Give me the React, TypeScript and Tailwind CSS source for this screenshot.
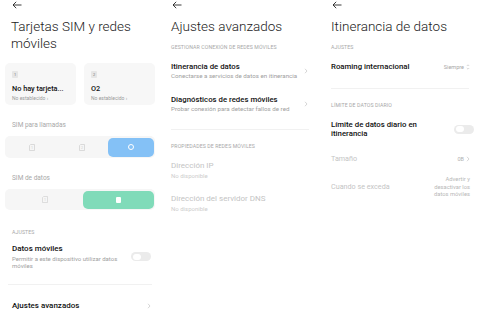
import React from 'react'

const font = { fontFamily: 'Roboto, "Noto Sans", sans-serif' }

function BackArrow() {
  return (
    <svg width="10" height="8" viewBox="0 0 10 8" className="text-neutral-800">
      <path d="M9.5 4H1M4.2 0.8L1 4l3.2 3.2" fill="none" stroke="currentColor" strokeWidth="0.9" />
    </svg>
  )
}

function Chevron({ className = '' }: { className?: string }) {
  return (
    <svg width="4" height="6" viewBox="0 0 4 6" className={className}>
      <path d="M1 0.8L3 3 1 5.2" fill="none" stroke="#c4c4c4" strokeWidth="0.7" />
    </svg>
  )
}

function Toggle() {
  return (
    <div className="w-[20px] h-[9px] rounded-full bg-[#ebebeb] flex items-center px-[1.5px]">
      <div className="w-[8px] h-[6px] rounded-full bg-white" />
    </div>
  )
}

function SimGlyph({ color, n }: { color: string; n?: string }) {
  return (
    <svg width="6" height="7" viewBox="0 0 6 7">
      <path d="M1.6 0.5H5.5V6.5H0.5V1.6Z" fill="none" stroke={color} strokeWidth="0.7" />
      {n && (
        <text x="3" y="5" fontSize="3.6" textAnchor="middle" fill={color} fontFamily="Roboto, sans-serif">
          {n}
        </text>
      )}
    </svg>
  )
}

function SimCard({ n, name, status }: { n: string; name: string; status: string }) {
  return (
    <div className="flex-1 min-w-0 h-[42px] rounded-[5px] bg-[#f7f7f7] px-[7px] pt-[8px] flex flex-col">
      <div className="w-[6px] h-[7px] rounded-[1px] bg-[#e6e6e6] text-[4px] text-[#777] flex items-center justify-center leading-none">
        {n}
      </div>
      <div className="mt-[6px] text-[7.3px] leading-[10px] text-[#111] font-medium whitespace-nowrap">{name}</div>
      <div className="mt-[0.5px] text-[5px] leading-[6px] text-[#9a9a9a] whitespace-nowrap">{status}</div>
    </div>
  )
}

function SectionHeader({ children, className = '' }: { children: React.ReactNode; className?: string }) {
  return <div className={`text-[5.2px] leading-[6px] tracking-[0.1px] text-[#a8a8a8] uppercase ${className}`}>{children}</div>
}

function PanelSims() {
  return (
    <div className="w-[160px] flex flex-col px-[5px]">
      <div className="pl-[7px] pt-[1px] h-[9px] flex items-center">
        <BackArrow />
      </div>
      <div className="pl-[6px] mt-[9px] text-[13.5px] leading-[17px] font-light text-[#222]">
        Tarjetas SIM y redes
        <br />
        móviles
      </div>
      <div className="mt-[11px] flex gap-[8px]">
        <SimCard n="1" name="No hay tarjeta..." status="No establecido ›" />
        <SimCard n="2" name="O2" status="No establecido ›" />
      </div>
      <div className="pl-[7px] mt-[16px] text-[6.5px] leading-[8px] text-[#a8a8a8]">SIM para llamadas</div>
      <div className="mt-[7px] h-[22px] rounded-[5px] bg-[#f6f6f6] flex items-center p-[1.5px]">
        <div className="flex-1 h-full flex items-center justify-center">
          <SimGlyph color="#cfcfcf" n="1" />
        </div>
        <div className="flex-1 h-full flex items-center justify-center">
          <SimGlyph color="#cfcfcf" n="2" />
        </div>
        <div className="w-[46px] h-full rounded-[5px] bg-[#84c1f6] flex items-center justify-center">
          <div className="w-[6px] h-[6px] rounded-full border-[1.5px] border-white" />
        </div>
      </div>
      <div className="pl-[7px] mt-[16px] text-[6.5px] leading-[8px] text-[#a8a8a8]">SIM de datos</div>
      <div className="mt-[7px] h-[21px] rounded-[5px] bg-[#f6f6f6] flex items-center p-[1.5px]">
        <div className="flex-1 h-full flex items-center justify-center">
          <SimGlyph color="#d2d2d2" n="1" />
        </div>
        <div className="w-[71px] h-full rounded-[5px] bg-[#80dbb9] flex items-center justify-center">
          <div className="w-[5px] h-[6px] rounded-[1px] bg-white" />
        </div>
      </div>
      <SectionHeader className="pl-[7px] mt-[19px]">Ajustes</SectionHeader>
      <div className="pl-[7px] pr-[4px] mt-[9px] flex items-center">
        <div className="flex-1">
          <div className="text-[8px] leading-[10px] font-medium text-[#111]">Datos móviles</div>
          <div className="mt-[0.5px] text-[6px] leading-[7.5px] text-[#a0a0a0] pr-[8px]">
            Permitir a este dispositivo utilizar datos móviles
          </div>
        </div>
        <Toggle />
      </div>
      <div className="mx-[3px] mt-[14px] h-px bg-[#f1f1f1]" />
      <div className="pl-[7px] pr-[4px] mt-[16px] flex items-center justify-between">
        <div className="text-[8px] leading-[10px] font-medium text-[#111]">Ajustes avanzados</div>
        <Chevron />
      </div>
    </div>
  )
}

function NavItem({ title, sub }: { title: string; sub: string }) {
  return (
    <div className="flex items-center">
      <div className="flex-1">
        <div className="text-[7.8px] leading-[10px] font-medium text-[#111]">{title}</div>
        <div className="mt-[0.5px] text-[6.2px] leading-[7px] text-[#a0a0a0]">{sub}</div>
      </div>
      <Chevron />
    </div>
  )
}

function InfoItem({ title, sub }: { title: string; sub: string }) {
  return (
    <div>
      <div className="text-[8px] leading-[10px] text-[#c4c4c4]">{title}</div>
      <div className="mt-[0.5px] text-[6px] leading-[7px] text-[#cdcdcd]">{sub}</div>
    </div>
  )
}

function PanelAdvanced() {
  return (
    <div className="w-[160px] flex flex-col px-[11px]">
      <div className="pl-[1px] pt-[1px] h-[9px] flex items-center">
        <BackArrow />
      </div>
      <div className="mt-[9px] text-[13.5px] leading-[17px] font-light text-[#222]">Ajustes avanzados</div>
      <SectionHeader className="mt-[9px]">Gestionar conexión de redes móviles</SectionHeader>
      <div className="mt-[12px] pr-[1px]">
        <NavItem title="Itinerancia de datos" sub="Conectarse a servicios de datos en itinerancia" />
      </div>
      <div className="mt-[15.5px] pr-[1px]">
        <NavItem title="Diagnósticos de redes móviles" sub="Probar conexión para detectar fallos de red" />
      </div>
      <div className="mt-[16.5px] h-px bg-[#f1f1f1]" />
      <SectionHeader className="mt-[13px]">Propiedades de redes móviles</SectionHeader>
      <div className="mt-[12px]">
        <InfoItem title="Dirección IP" sub="No disponible" />
      </div>
      <div className="mt-[15.5px]">
        <InfoItem title="Dirección del servidor DNS" sub="No disponible" />
      </div>
    </div>
  )
}

function PanelRoaming() {
  return (
    <div className="w-[160px] flex flex-col pl-[11px] pr-[6px]">
      <div className="pl-[1px] pt-[1px] h-[9px] flex items-center">
        <BackArrow />
      </div>
      <div className="mt-[9px] text-[13.5px] leading-[17px] font-light text-[#222]">Itinerancia de datos</div>
      <SectionHeader className="mt-[9px]">Ajustes</SectionHeader>
      <div className="mt-[12px] flex items-center justify-between pr-[4px]">
        <div className="text-[7.8px] leading-[10px] font-medium text-[#111]">Roaming internacional</div>
        <div className="flex items-center gap-[2px] text-[5.5px] text-[#a8a8a8]">
          Siempre
          <svg width="4" height="6" viewBox="0 0 4 6">
            <path d="M0.8 2L2 0.8 3.2 2M0.8 4L2 5.2 3.2 4" fill="none" stroke="#bdbdbd" strokeWidth="0.6" />
          </svg>
        </div>
      </div>
      <div className="mt-[16px] mr-[5px] h-px bg-[#f1f1f1]" />
      <SectionHeader className="mt-[13px]">Límite de datos diario</SectionHeader>
      <div className="mt-[11.5px] flex items-center">
        <div className="flex-1 text-[7.8px] leading-[9.5px] font-medium text-[#111] pr-[30px]">
          Límite de datos diario en itinerancia
        </div>
        <Toggle />
      </div>
      <div className="mt-[15.5px] flex items-center justify-between pr-[4px]">
        <div className="text-[7.2px] leading-[10px] text-[#c4c4c4]">Tamaño</div>
        <div className="flex items-center gap-[2px] text-[5.5px] text-[#b0b0b0]">
          0B
          <Chevron />
        </div>
      </div>
      <div className="mt-[12px] flex items-center justify-between pr-[4px]">
        <div className="text-[7.2px] leading-[10px] text-[#c4c4c4]">Cuando se exceda</div>
        <div className="w-[44px] text-right text-[5.8px] leading-[7.5px] text-[#b8b8b8]">
          Advertir y desactivar los datos móviles
        </div>
      </div>
    </div>
  )
}

export default function App() {
  return (
    <div className="w-[480px] h-[315px] bg-white flex overflow-hidden" style={font}>
      <PanelSims />
      <PanelAdvanced />
      <PanelRoaming />
    </div>
  )
}
